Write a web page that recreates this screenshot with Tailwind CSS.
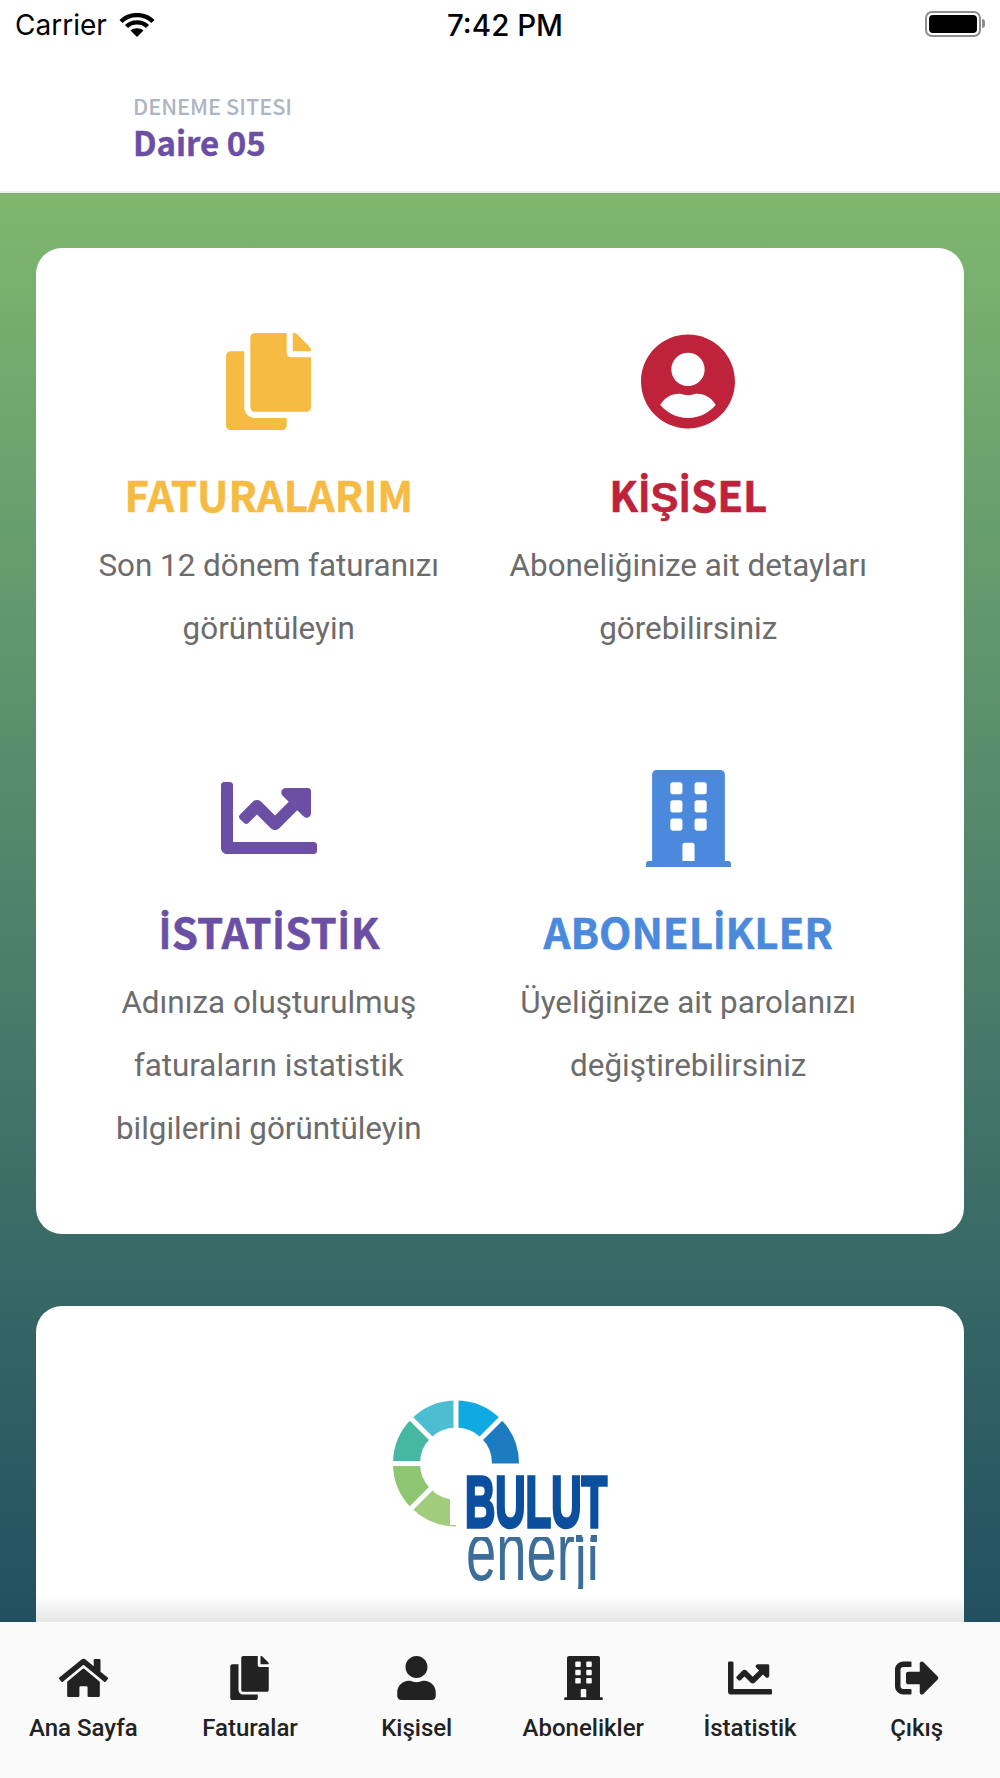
<!DOCTYPE html>
<html lang="tr">
<head>
<meta charset="utf-8">
<script src="https://cdn.jsdelivr.net/npm/@tailwindcss/browser@4"></script>
</head>
<body class="bg-white">
<div class="w-[1000px] h-[1778px] flex flex-col overflow-hidden font-['Roboto',sans-serif]">
  <!-- status bar -->
  <div class="h-[50px] shrink-0 relative flex items-center justify-center">
    <div class="absolute left-[15px] top-[9px] flex items-center gap-[12px] text-black text-[28px] leading-[32px] font-['Inter',sans-serif]">
      <span>Carrier</span>
      <svg class="w-[36px] h-[24px]" viewBox="0 0 36 24" fill="none" stroke="#000" stroke-width="4.4"><path d="M2 8.5C10.5 0 25.500 0 34 8.500"/><path d="M7.500 13.500C13 8 23 8 28.500 13.500"/><path d="M18 24L11.500 17.500C15 14.500 21 14.500 24.500 17.500Z" fill="#000" stroke="none"/></svg>
    </div>
    <span class="text-black text-[29.500px] leading-[32px] font-medium font-['Inter',sans-serif] ml-[10px]">7:42 PM</span>
    <div class="absolute left-[925px] top-[11px] w-[56px] h-[26px] rounded-[7px] border-2 border-[#8e8e8e] p-[2px]"><div class="w-full h-full rounded-[4px] bg-black"></div></div>
    <div class="absolute left-[982px] top-[19px] w-[3px] h-[9px] rounded-r-[3px] bg-[#8e8e8e]"></div>
  </div>
  <!-- header -->
  <div class="h-[143px] shrink-0 pl-[133px] pt-[43px] border-b-2 border-[#efefef] font-['Noto_Sans_CJK_SC',sans-serif]">
    <div class="text-[21.700px] leading-[26px] font-medium text-[#adb5c3]">DENEME SITESI</div>
    <div class="mt-[1px] text-[33px] leading-[44px] font-bold text-[#6a4fa5] [-webkit-text-stroke:0.4px]">Daire 05</div>
  </div>
  <!-- main -->
  <div class="flex-1 min-h-0 overflow-hidden px-[36px] pt-[55px] bg-gradient-to-b from-[#7fb76e] to-[#225060]">
    <div class="h-[986px] bg-white rounded-[26px] pl-[23px] pr-[66px] pt-[85px] grid grid-cols-2 content-start">
      <!-- Faturalarım -->
      <div class="h-[437px] flex flex-col items-center text-center">
        <svg class="h-[97px] w-[85px]" viewBox="0 0 448 512" fill="#f6bb42"><path d="M320 448v40c0 13.255-10.745 24-24 24H24c-13.255 0-24-10.745-24-24V120c0-13.255 10.745-24 24-24h72v296c0 30.879 25.121 56 56 56h168zm0-344V0H152c-13.255 0-24 10.745-24 24v368c0 13.255 10.745 24 24 24h272c13.255 0 24-10.745 24-24V128H344c-13.2 0-24-10.8-24-24zm120.971-31.029L375.029 7.029A24 24 0 0 0 358.059 0H352v96h96v-6.059a24 24 0 0 0-7.029-16.97z"/></svg>
        <div class="mt-[38px] h-[52px] text-[42px] leading-[52px] font-bold text-[#f6bb42] [-webkit-text-stroke:0.5px] font-['Noto_Sans_CJK_SC',sans-serif]">FATURALARIM</div>
        <div class="mt-[14px] text-[31.400px] leading-[63px] text-[#6c6c6c]">Son 12 dönem faturanızı<br>görüntüleyin</div>
      </div>
      <!-- Kişisel -->
      <div class="h-[437px] flex flex-col items-center text-center">
        <svg class="h-[97px] w-[94px]" viewBox="0 0 496 512" fill="#be233b"><path d="M248 8C111 8 0 119 0 256s111 248 248 248 248-111 248-248S385 8 248 8zm0 96c48.6 0 88 39.4 88 88s-39.4 88-88 88-88-39.4-88-88 39.4-88 88-88zm0 344c-58.7 0-111.3-26.6-146.5-68.2 18.8-35.4 55.6-59.8 98.5-59.8 2.4 0 4.8.4 7.1 1.1 13 4.2 26.6 6.9 40.9 6.9 14.3 0 28-2.7 40.9-6.9 2.3-.7 4.7-1.1 7.1-1.1 42.9 0 79.7 24.4 98.5 59.8C359.3 421.4 306.7 448 248 448z"/></svg>
        <div class="mt-[38px] h-[52px] text-[42px] leading-[52px] font-bold text-[#be233b] [-webkit-text-stroke:0.5px] font-['Noto_Sans_CJK_SC',sans-serif]">K<span class="leading-[0] font-['Lato',sans-serif]">İ</span>Ş<span class="leading-[0] font-['Lato',sans-serif]">İ</span>SEL</div>
        <div class="mt-[14px] text-[31.400px] leading-[63px] text-[#6c6c6c]">Aboneliğinize ait detayları<br>görebilirsiniz</div>
      </div>
      <!-- İstatistik -->
      <div class="flex flex-col items-center text-center">
        <svg class="h-[96px] w-[96px]" viewBox="0 0 512 512" fill="#6a4fa5"><path d="M496 384H64V80c0-8.84-7.16-16-16-16H16C7.16 64 0 71.16 0 80v336c0 17.67 14.33 32 32 32h464c8.84 0 16-7.16 16-16v-32c0-8.84-7.16-16-16-16zM464 96H345.94c-21.38 0-32.09 25.85-16.97 40.97l32.4 32.4L288 242.75l-73.37-73.37c-12.5-12.5-32.76-12.5-45.25 0l-68.69 68.69c-6.25 6.25-6.25 16.38 0 22.63l22.62 22.62c6.25 6.25 16.38 6.25 22.63 0L192 237.25l73.37 73.37c12.5 12.5 32.76 12.5 45.25 0l96-96 32.4 32.4c15.12 15.12 40.97 4.41 40.97-16.97V112c.01-8.84-7.15-16-15.99-16z"/></svg>
        <div class="mt-[39px] h-[52px] text-[42px] leading-[52px] font-bold text-[#6a4fa5] [-webkit-text-stroke:0.5px] font-['Noto_Sans_CJK_SC',sans-serif]"><span class="mx-[0.75px] leading-[0] font-['Lato',sans-serif]">İ</span>STAT<span class="mx-[0.75px] leading-[0] font-['Lato',sans-serif]">İ</span>ST<span class="mx-[0.75px] leading-[0] font-['Lato',sans-serif]">İ</span>K</div>
        <div class="mt-[14px] text-[31.400px] leading-[63px] text-[#6c6c6c]">Adınıza oluşturulmuş<br>faturaların istatistik<br>bilgilerini görüntüleyin</div>
      </div>
      <!-- Abonelikler -->
      <div class="flex flex-col items-center text-center">
        <svg class="h-[97px] w-[85px]" viewBox="0 0 448 512" fill="#4a89dc"><path d="M436 480h-20V24c0-13.255-10.745-24-24-24H56C42.745 0 32 10.745 32 24v456H12c-6.627 0-12 5.373-12 12v20h448v-20c0-6.627-5.373-12-12-12zM128 76c0-6.627 5.373-12 12-12h40c6.627 0 12 5.373 12 12v40c0 6.627-5.373 12-12 12h-40c-6.627 0-12-5.373-12-12V76zm0 96c0-6.627 5.373-12 12-12h40c6.627 0 12 5.373 12 12v40c0 6.627-5.373 12-12 12h-40c-6.627 0-12-5.373-12-12v-40zm52 148h-40c-6.627 0-12-5.373-12-12v-40c0-6.627 5.373-12 12-12h40c6.627 0 12 5.373 12 12v40c0 6.627-5.373 12-12 12zm76 160h-64v-84c0-6.627 5.373-12 12-12h40c6.627 0 12 5.373 12 12v84zm64-172c0 6.627-5.373 12-12 12h-40c-6.627 0-12-5.373-12-12v-40c0-6.627 5.373-12 12-12h40c6.627 0 12 5.373 12 12v40zm0-96c0 6.627-5.373 12-12 12h-40c-6.627 0-12-5.373-12-12v-40c0-6.627 5.373-12 12-12h40c6.627 0 12 5.373 12 12v40zm0-96c0 6.627-5.373 12-12 12h-40c-6.627 0-12-5.373-12-12V76c0-6.627 5.373-12 12-12h40c6.627 0 12 5.373 12 12v40z"/></svg>
        <div class="mt-[38px] h-[52px] text-[42px] leading-[52px] font-bold text-[#4a89dc] [-webkit-text-stroke:0.5px] font-['Noto_Sans_CJK_SC',sans-serif]">ABONEL<span class="leading-[0] font-['Lato',sans-serif]">İ</span>KLER</div>
        <div class="mt-[14px] text-[31.400px] leading-[63px] text-[#6c6c6c]">Üyeliğinize ait parolanızı<br>değiştirebilirsiniz</div>
      </div>
    </div>
    <!-- logo card -->
    <div class="mt-[72px] h-[317px] bg-white rounded-t-[26px] flex flex-col items-center pt-[89px]">
      <svg class="w-[230px] h-[200px] shrink-0" viewBox="0 0 230 200" fill="none">
        <defs><clipPath id="enerjiClip"><rect x="70" y="142" width="160" height="52"/></clipPath></defs>
        <g stroke-width="27">
          <path d="M71 19A49.500 49.500 0 0 1 106 33.500" stroke="#10a9e2"/>
          <path d="M106 33.500A49.500 49.500 0 0 1 120.500 68.500" stroke="#1c7cbf"/>
          <path d="M36 33.500A49.500 49.500 0 0 1 71 19" stroke="#4dbdd1"/>
          <path d="M21.500 68.500A49.500 49.500 0 0 1 36 33.500" stroke="#46b8a2"/>
          <path d="M36 103.500A49.500 49.500 0 0 1 21.500 68.500" stroke="#8ec672"/>
          <path d="M71 118A49.500 49.500 0 0 1 36 103.500" stroke="#a0cc7c"/>
        </g>
        <g stroke="#fff" stroke-width="5">
          <path d="M71 0V40"/><path d="M0 68.500H42"/><path d="M60 57.500L20 17.500"/><path d="M82 57.500L122 17.500"/><path d="M60 79.500L20 119.500"/>
          <path d="M68 90V130" stroke-width="6"/>
        </g>
        <text transform="translate(80 132) scale(.575 1)" font-family="'Liberation Sans',sans-serif" font-weight="700" font-size="73" fill="#0b4f9e" stroke="#0b4f9e" stroke-width="3.500">BULUT</text>
        <g clip-path="url(#enerjiClip)"><text transform="translate(81 185) scale(.655 1)" font-family="'Liberation Sans',sans-serif" font-size="83" fill="#3d6d99">enerji</text></g>
        <rect x="186" y="147" width="28" height="4" fill="#fff"/>
        <rect x="191" y="140" width="6" height="7" fill="#3d6d99"/>
        <rect x="206" y="140" width="6" height="7" fill="#3d6d99"/>
      </svg>
      <div class="mt-auto w-full h-[34px] bg-gradient-to-b from-white to-[#e5e5e5]"></div>
    </div>
  </div>
  <!-- tab bar -->
  <div class="h-[156px] shrink-0 bg-[#fafafa] grid grid-cols-6 pt-[34px] text-[#222] text-[24px] leading-[28px] font-medium">
    <div class="flex flex-col items-center">
      <svg class="h-[44px] w-[49px]" viewBox="0 0 576 512" fill="#222"><path d="M280.37 148.26L96 300.11V464a16 16 0 0 0 16 16l112.06-.29a16 16 0 0 0 15.92-16V368a16 16 0 0 1 16-16h64a16 16 0 0 1 16 16v95.64a16 16 0 0 0 16 16.05L464 480a16 16 0 0 0 16-16V300L295.67 148.26a12.19 12.19 0 0 0-15.3 0zM571.6 251.47L488 182.56V44.05a12 12 0 0 0-12-12h-56a12 12 0 0 0-12 12v72.61L318.47 43a48 48 0 0 0-61 0L4.34 251.47a12 12 0 0 0-1.6 16.9l25.5 31A12 12 0 0 0 45.15 301l235.22-193.74a12.19 12.19 0 0 1 15.3 0L530.9 301a12 12 0 0 0 16.9-1.6l25.5-31a12 12 0 0 0-1.7-16.93z"/></svg>
      <span class="mt-[14px]">Ana Sayfa</span>
    </div>
    <div class="flex flex-col items-center">
      <svg class="h-[44px] w-[39px]" viewBox="0 0 448 512" fill="#222"><path d="M320 448v40c0 13.255-10.745 24-24 24H24c-13.255 0-24-10.745-24-24V120c0-13.255 10.745-24 24-24h72v296c0 30.879 25.121 56 56 56h168zm0-344V0H152c-13.255 0-24 10.745-24 24v368c0 13.255 10.745 24 24 24h272c13.255 0 24-10.745 24-24V128H344c-13.2 0-24-10.8-24-24zm120.971-31.029L375.029 7.029A24 24 0 0 0 358.059 0H352v96h96v-6.059a24 24 0 0 0-7.029-16.97z"/></svg>
      <span class="mt-[14px]">Faturalar</span>
    </div>
    <div class="flex flex-col items-center">
      <svg class="h-[44px] w-[39px]" viewBox="0 0 448 512" fill="#222"><path d="M224 256c70.700 0 128-57.300 128-128S294.700 0 224 0 96 57.300 96 128s57.300 128 128 128zm89.600 32h-16.700c-22.200 10.200-46.900 16-72.900 16s-50.600-5.800-72.900-16h-16.700C60.200 288 0 348.200 0 422.400V464c0 26.500 21.500 48 48 48h352c26.500 0 48-21.500 48-48v-41.600c0-74.200-60.200-134.400-134.400-134.400z"/></svg>
      <span class="mt-[14px]">Kişisel</span>
    </div>
    <div class="flex flex-col items-center">
      <svg class="h-[44px] w-[39px]" viewBox="0 0 448 512" fill="#222"><path d="M436 480h-20V24c0-13.255-10.745-24-24-24H56C42.745 0 32 10.745 32 24v456H12c-6.627 0-12 5.373-12 12v20h448v-20c0-6.627-5.373-12-12-12zM128 76c0-6.627 5.373-12 12-12h40c6.627 0 12 5.373 12 12v40c0 6.627-5.373 12-12 12h-40c-6.627 0-12-5.373-12-12V76zm0 96c0-6.627 5.373-12 12-12h40c6.627 0 12 5.373 12 12v40c0 6.627-5.373 12-12 12h-40c-6.627 0-12-5.373-12-12v-40zm52 148h-40c-6.627 0-12-5.373-12-12v-40c0-6.627 5.373-12 12-12h40c6.627 0 12 5.373 12 12v40c0 6.627-5.373 12-12 12zm76 160h-64v-84c0-6.627 5.373-12 12-12h40c6.627 0 12 5.373 12 12v84zm64-172c0 6.627-5.373 12-12 12h-40c-6.627 0-12-5.373-12-12v-40c0-6.627 5.373-12 12-12h40c6.627 0 12 5.373 12 12v40zm0-96c0 6.627-5.373 12-12 12h-40c-6.627 0-12-5.373-12-12v-40c0-6.627 5.373-12 12-12h40c6.627 0 12 5.373 12 12v40zm0-96c0 6.627-5.373 12-12 12h-40c-6.627 0-12-5.373-12-12V76c0-6.627 5.373-12 12-12h40c6.627 0 12 5.373 12 12v40z"/></svg>
      <span class="mt-[14px]">Abonelikler</span>
    </div>
    <div class="flex flex-col items-center">
      <svg class="h-[44px] w-[44px]" viewBox="0 0 512 512" fill="#222"><path d="M496 384H64V80c0-8.840-7.160-16-16-16H16C7.160 64 0 71.160 0 80v336c0 17.670 14.330 32 32 32h464c8.840 0 16-7.160 16-16v-32c0-8.840-7.160-16-16-16zM464 96H345.940c-21.380 0-32.090 25.850-16.970 40.970l32.400 32.400L288 242.750l-73.370-73.370c-12.500-12.500-32.760-12.500-45.250 0l-68.690 68.690c-6.250 6.250-6.250 16.380 0 22.630l22.620 22.620c6.250 6.250 16.380 6.250 22.630 0L192 237.250l73.370 73.370c12.500 12.500 32.760 12.500 45.250 0l96-96 32.400 32.400c15.120 15.120 40.970 4.410 40.970-16.970V112c.01-8.840-7.150-16-15.990-16z"/></svg>
      <span class="mt-[14px]">İstatistik</span>
    </div>
    <div class="flex flex-col items-center">
      <svg class="h-[44px] w-[44px]" viewBox="0 0 512 512" fill="#222"><path d="M497 273L329 441c-15 15-41 4.500-41-17v-96H152c-13.300 0-24-10.700-24-24v-96c0-13.300 10.700-24 24-24h136V88c0-21.400 25.900-32 41-17l168 168c9.300 9.400 9.300 24.600 0 34zM192 436v-40c0-6.600-5.400-12-12-12H96c-17.700 0-32-14.300-32-32V160c0-17.700 14.300-32 32-32h84c6.600 0 12-5.400 12-12V76c0-6.600-5.400-12-12-12H96c-53 0-96 43-96 96v192c0 53 43 96 96 96h84c6.600 0 12-5.400 12-12z"/></svg>
      <span class="mt-[14px]">Çıkış</span>
    </div>
  </div>
</div>
</body>
</html>
